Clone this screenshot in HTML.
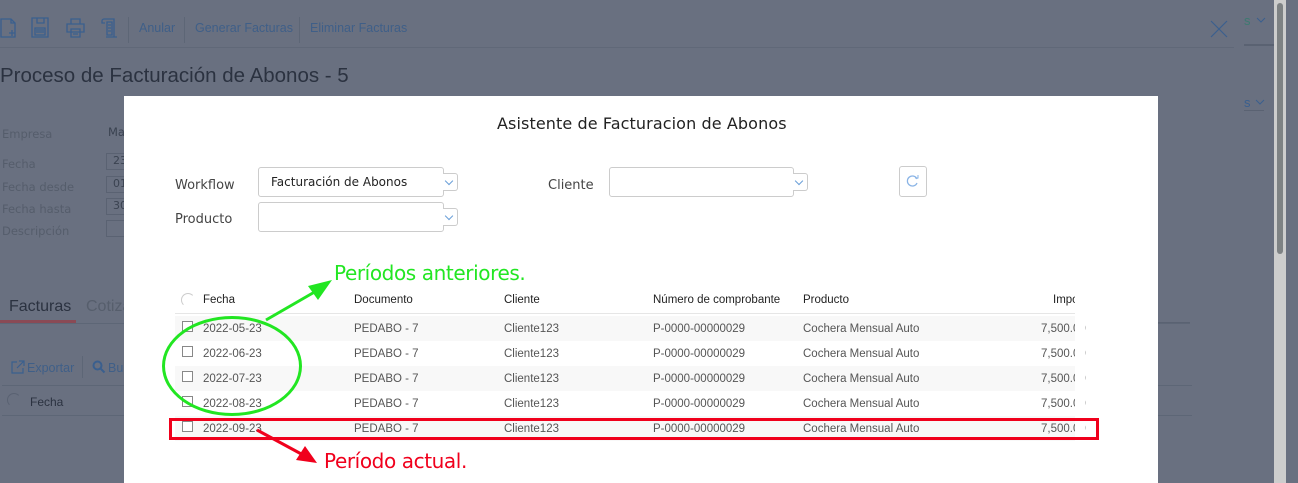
<!DOCTYPE html>
<html><head><meta charset="utf-8"><style>
*{margin:0;padding:0;box-sizing:border-box}
html{width:1298px;height:483px;overflow:hidden}
body{width:1298px;height:483px;overflow:hidden;background:#697080;font-family:"Liberation Sans",sans-serif;position:relative}
.a{position:absolute;white-space:nowrap}
.bg{color:#3f5f88;font-size:12.5px}
.lbl{color:#555d6b;font-size:11.5px;font-family:"DejaVu Sans",sans-serif}
.in{position:absolute;border:1px solid #5a6272;height:17px;width:30px;color:#3a4250;font-size:11px;padding-left:6px;font-family:"DejaVu Sans",sans-serif}
.modal{position:absolute;left:124px;top:96px;width:1034px;height:387px;background:#fff}
.ml{color:#444;font-size:13px;font-family:"DejaVu Sans",sans-serif}
.sel{position:absolute;border:1px solid #ccc;border-radius:3px;height:30px;background:#fff}
.dd{position:absolute;width:15px;height:18px;border:1px solid #ccc;border-left:none;border-radius:0 3px 3px 0;background:#fff}
.dd:after{content:"";position:absolute;left:3px;top:4px;width:5px;height:5px;border-right:1.5px solid #6a9fd8;border-bottom:1.5px solid #6a9fd8;transform:rotate(45deg)}
.row{position:absolute;left:175px;width:900px;height:25px;font-size:11.5px;color:#555}
.row span{position:absolute;top:7px}
.cb{position:absolute;left:7px;top:5px;width:11px;height:11px;border:1px solid #888;background:#fff}
.th{position:absolute;font-size:11.5px;color:#222;top:294px}
</style></head><body>
<svg class="a" style="left:0;top:16px" width="130" height="24" viewBox="0 0 130 24" fill="none" stroke="#3a5f8e" stroke-width="1.3">
<path d="M1 3h10l4 4v14H1z M11 3v4h4 M12 14v6 M9 17h6"/>
<path d="M32 2h16v19H32z M37 2v5h7V2 M35 12h10v7H35z M36 14h8 M36 16h8"/>
<path d="M71 3h9v5h-9z M67 8h17v8H67z M71 13h9v8h-9z M73 16h5 M73 18h5"/>
<path d="M104 3h10v18h-8 M104 3a2 2 0 0 0-2 2v2h3 M107 6h5v13h-5z M108 9h3 M108 12h3 M108 15h3 M114 21h3"/>
</svg>
<div class="a" style="left:128px;top:17px;width:1px;height:26px;background:#5d6676"></div>
<div class="a bg" style="left:139px;top:21px">Anular</div>
<div class="a" style="left:184px;top:17px;width:1px;height:26px;background:#5d6676"></div>
<div class="a bg" style="left:195px;top:21px">Generar Facturas</div>
<div class="a" style="left:299px;top:17px;width:1px;height:26px;background:#5d6676"></div>
<div class="a bg" style="left:310px;top:21px">Eliminar Facturas</div>
<div class="a" style="left:0;top:47px;width:1234px;height:1px;background:#606878"></div>
<svg class="a" style="left:1210px;top:20px" width="18" height="18"><path d="M1 1L17 17M17 1L1 17" stroke="#3a5f8e" stroke-width="1.2"/></svg>
<div class="a" style="left:1244px;top:13px;color:#3d7a70;font-size:13px">s</div>
<svg class="a" style="left:1256px;top:17px" width="10" height="6"><path d="M1 1l4 4 4-4" stroke="#3a5f8e" fill="none"/></svg>
<div class="a" style="left:1244px;top:44px;width:30px;height:2px;background:#5a6272"></div>
<div class="a" style="left:1244px;top:95px;color:#3a5f8e;font-size:13px">s</div>
<svg class="a" style="left:1255px;top:99px" width="10" height="6"><path d="M1 1l4 4 4-4" stroke="#3a5f8e" fill="none"/></svg>
<div class="a" style="left:1244px;top:110px;width:20px;height:1px;background:#5a6272"></div>
<div class="a" style="left:0;top:64px;font-size:20.5px;color:#2b3240;font-family:'Liberation Sans',sans-serif">Proceso de Facturación de Abonos - 5</div>
<div class="a lbl" style="left:2px;top:127px">Empresa</div>
<div class="a lbl" style="left:108px;top:125px;color:#3a4250">Ma</div>
<div class="a lbl" style="left:2px;top:157px">Fecha</div>
<div class="a lbl" style="left:2px;top:180px">Fecha desde</div>
<div class="a lbl" style="left:2px;top:202px">Fecha hasta</div>
<div class="a lbl" style="left:2px;top:224px">Descripción</div>
<div class="in" style="left:106px;top:153px">23</div>
<div class="in" style="left:106px;top:176px">01</div>
<div class="in" style="left:106px;top:198px">30</div>
<div class="in" style="left:106px;top:220px"></div>
<div class="a" style="left:9px;top:298px;font-size:16px;color:#2b3240">Facturas</div>
<div class="a" style="left:86px;top:298px;font-size:16px;color:#565e6c">Cotiza</div>
<div class="a" style="left:0;top:320px;width:76px;height:3px;background:#8a4a55"></div>
<div class="a" style="left:0;top:323px;width:1190px;height:1px;background:#5d6676"></div>
<svg class="a" style="left:11px;top:360px" width="14" height="14" fill="none" stroke="#3a5f8e" stroke-width="1.2"><path d="M6 2H1v11h11V8 M8 1h5v5 M13 1L6 8"/></svg>
<div class="a bg" style="left:27px;top:361px">Exportar</div>
<div class="a" style="left:82px;top:356px;width:1px;height:22px;background:#5d6676"></div>
<svg class="a" style="left:92px;top:360px" width="14" height="14" fill="none" stroke="#3a5f8e" stroke-width="2"><circle cx="5.5" cy="5.5" r="4"/><path d="M8.5 8.5l4 4"/></svg>
<div class="a bg" style="left:108px;top:361px">Bu</div>
<div class="a" style="left:2px;top:385px;width:1190px;height:1px;background:#5d6676"></div>
<div class="a" style="left:7px;top:393px;width:14px;height:14px;border:1px solid #5a6272;border-radius:50%;border-right-color:transparent;border-bottom-color:transparent"></div>
<div class="a" style="left:30px;top:395px;font-size:12px;color:#2b3240">Fecha</div>
<div class="a" style="left:2px;top:415px;width:1190px;height:1px;background:#5d6676"></div>
<div class="a" style="left:1158px;top:322px;width:32px;height:1px;background:#5a6272"></div>
<div class="a" style="left:1274px;top:0;width:12px;height:483px;background:#cdcdcd"></div>
<div class="a" style="left:1277px;top:3px;width:6px;height:251px;background:#7e8284;border-radius:3px"></div>
<div class="modal"></div>
<div class="a" style="left:497px;top:114px;font-size:16px;color:#222;font-family:'DejaVu Sans',sans-serif;letter-spacing:0.1px">Asistente de Facturacion de Abonos</div>
<div class="a ml" style="left:175px;top:178px">Workflow</div>
<div class="sel" style="left:258px;top:167px;width:186px"></div>
<div class="a" style="left:271px;top:175px;font-size:12px;color:#222;font-family:'DejaVu Sans',sans-serif">Facturación de Abonos</div>
<div class="dd" style="left:443px;top:173px"></div>
<div class="a ml" style="left:175px;top:212px">Producto</div>
<div class="sel" style="left:258px;top:202px;width:186px"></div>
<div class="dd" style="left:443px;top:208px"></div>
<div class="a ml" style="left:548px;top:178px">Cliente</div>
<div class="sel" style="left:609px;top:167px;width:185px"></div>
<div class="dd" style="left:793px;top:173px"></div>
<div class="a" style="left:899px;top:166px;width:28px;height:31px;border:1px solid #ccc;border-radius:3px"></div>
<svg class="a" style="left:906px;top:174px" width="14" height="14"><path d="M11 5A5 5 0 1 0 11 9" stroke="#8ab4e6" fill="none" stroke-width="1.3"/><path d="M9 4h3V1" stroke="#8ab4e6" fill="none"/></svg>
<div class="a" style="left:181px;top:293px;width:14px;height:14px;border:1px solid #ccc;border-radius:50%;border-right-color:transparent;border-bottom-color:transparent"></div>
<div class="th" style="left:203px">Fecha</div>
<div class="th" style="left:354px">Documento</div>
<div class="th" style="left:504px">Cliente</div>
<div class="th" style="left:653px">Número de comprobante</div>
<div class="th" style="left:803px">Producto</div>
<div class="th" style="left:1053px">Impo</div>
<div class="a" style="left:175px;top:313px;width:900px;height:1px;background:#e6e6e6"></div>
<div class="row" style="top:316px;background:#f8f8f8"><div class="cb"></div><span style="left:28px">2022-05-23</span><span style="left:179px">PEDABO - 7</span><span style="left:329px">Cliente123</span><span style="left:478px">P-0000-00000029</span><span style="left:628px">Cochera Mensual Auto</span><span style="left:866px">7,500.00</span></div>
<div class="row" style="top:341px"><div class="cb"></div><span style="left:28px">2022-06-23</span><span style="left:179px">PEDABO - 7</span><span style="left:329px">Cliente123</span><span style="left:478px">P-0000-00000029</span><span style="left:628px">Cochera Mensual Auto</span><span style="left:866px">7,500.00</span></div>
<div class="row" style="top:366px;background:#f8f8f8"><div class="cb"></div><span style="left:28px">2022-07-23</span><span style="left:179px">PEDABO - 7</span><span style="left:329px">Cliente123</span><span style="left:478px">P-0000-00000029</span><span style="left:628px">Cochera Mensual Auto</span><span style="left:866px">7,500.00</span></div>
<div class="row" style="top:391px"><div class="cb"></div><span style="left:28px">2022-08-23</span><span style="left:179px">PEDABO - 7</span><span style="left:329px">Cliente123</span><span style="left:478px">P-0000-00000029</span><span style="left:628px">Cochera Mensual Auto</span><span style="left:866px">7,500.00</span></div>
<div class="row" style="top:416px;background:#f8f8f8"><div class="cb"></div><span style="left:28px">2022-09-23</span><span style="left:179px">PEDABO - 7</span><span style="left:329px">Cliente123</span><span style="left:478px">P-0000-00000029</span><span style="left:628px">Cochera Mensual Auto</span><span style="left:866px">7,500.00</span></div>
<div class="a" style="left:1075px;top:290px;width:10px;height:160px;background:#fff"></div>
<div class="a" style="left:169px;top:418px;width:930px;height:22px;border:3px solid #f0001c"></div>
<div class="a" style="left:162px;top:316px;width:140px;height:100px;border:3px solid #22e622;border-radius:50%"></div>
<svg class="a" style="left:0;top:0" width="1298" height="483">
<path d="M266 320L318 290" stroke="#22e622" stroke-width="3"/><path d="M332 280L308 286 318 300z" fill="#22e622"/>
<path d="M257 430L305 456" stroke="#f0001c" stroke-width="3"/><path d="M317 463L296 460 305 446z" fill="#f0001c"/>
</svg>
<div class="a" style="left:334px;top:261px;font-size:20px;color:#22e622;font-family:'DejaVu Sans',sans-serif;letter-spacing:-0.4px">Períodos anteriores.</div>
<div class="a" style="left:324px;top:449px;font-size:20px;color:#f0001c;font-family:'DejaVu Sans',sans-serif;letter-spacing:-0.4px">Período actual.</div>
</body></html>
